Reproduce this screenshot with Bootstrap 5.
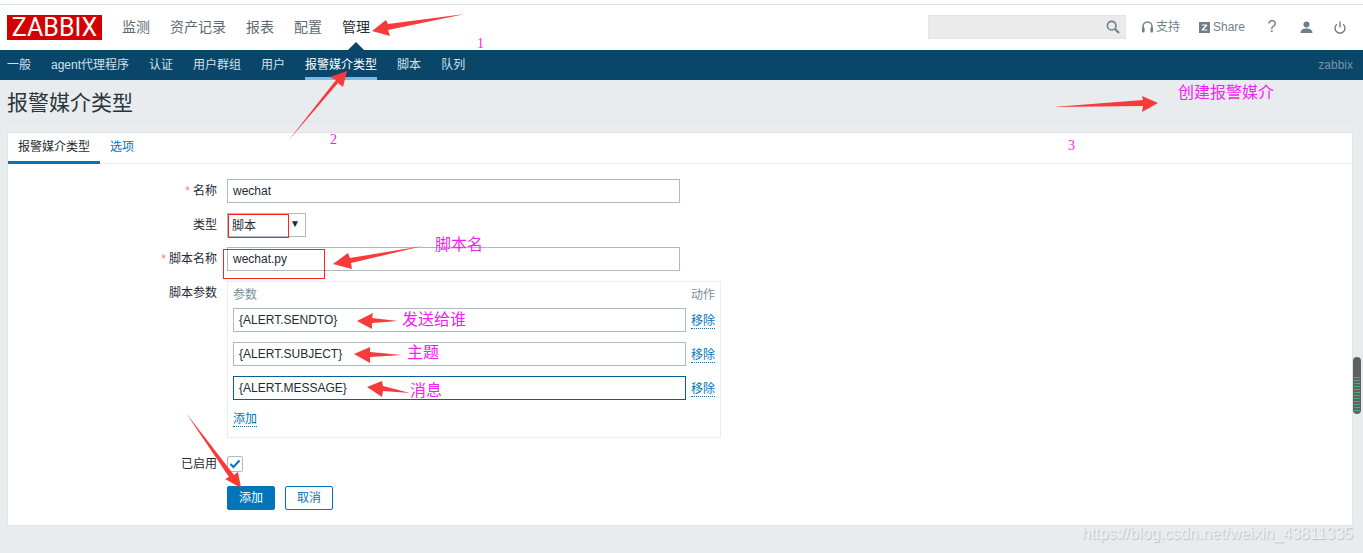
<!DOCTYPE html>
<html lang="zh">
<head>
<meta charset="utf-8">
<title>报警媒介类型</title>
<link href="https://cdn.jsdelivr.net/npm/bootstrap@5.3.0/dist/css/bootstrap.min.css" rel="stylesheet">
<style>
html,body{height:553px;overflow:hidden}
body{background:#e9ecef;font-family:"Liberation Sans","Noto Sans CJK SC",sans-serif;font-size:12px;color:#1f2c33;position:relative;line-height:14px}
a{text-decoration:none}
.top-edge{height:5px;background:#fff;border-bottom:1px solid #dfe4e7}
.zbx-head{height:45px;background:#fff;padding:10px 17px 0 7px}
.zbx-logo{width:95px;height:25px;background:#d40000;color:#fff;font-family:Roboto,"Liberation Sans",sans-serif;font-weight:400;font-size:25px;line-height:25px;text-align:center;margin-right:20px}
.main-links{gap:20px;font-size:14px;line-height:25px}
.main-links a{color:#5c6b73;position:relative;display:block}
.main-links a.on{color:#1f2c33}
.main-links a.on::after{content:"";position:absolute;left:6px;top:27px;border:8px solid transparent;border-top:0;border-bottom-color:#0a466a}
.zbx-search{width:198px;height:24px;background:#ebebeb;border:1px solid #e5e5e5;padding-right:5px}
.tool-links{color:#6f7f88;line-height:24px}
.tool-item{display:flex;align-items:center;gap:3px;color:#6f7f88}
.sub-bar{height:30px;background:#0a466a;padding:0 10px 0 7px}
.sub-links{gap:20px}
.sub-links a{color:#cfe2ee;display:block;height:30px;line-height:30px}
.sub-links a.on{color:#fff;border-bottom:3px solid #7ab9e8}
.sub-user{color:#7a94a5;line-height:30px}
.page-wrap{padding:0 10px 0 7px}
.page-head{height:42px;border-bottom:1px solid #dfe4e7;font-size:21px;line-height:46px;font-weight:400;margin:0;color:#2b363c}
.zbx-panel{margin-top:10px;height:394px;background:#fff;border:1px solid #dfe4e7;border-radius:0}
.tab-row{height:31px;border-bottom:1px solid #ebeef0;padding-left:0}
.tab-row a{display:block;height:31px;padding:0 10px;line-height:29px;color:#0275b8}
.tab-row a.on{color:#1f2c33;border-bottom:3px solid #0275b8}
.form-area{padding-top:15px}
.f-row{display:flex;margin-bottom:10px}
.f-label{width:219px;text-align:right;padding-right:10px;line-height:24px;flex:none;color:#1f2c33}
.req{color:#e08a7d;margin-right:3px}
.f-input{display:block;height:24px;width:453px;border:1px solid #acbbc2;padding:0 5px;line-height:22px;background:#fff;color:#1f2c33}
.f-select{width:79px;height:24px;border:1px solid #acbbc2;padding:0 4px;line-height:24px;justify-content:space-between}
.caret{font-size:10px;color:#1f2c33;line-height:20px;padding-right:1px}
.param-box{width:494px;height:157px;border:1px solid #ebeef0;padding:5px}
.param-head{color:#768d99;height:21px;line-height:17px}
.param-line{display:flex;justify-content:space-between;margin-bottom:10px}
.param-line .f-input{width:453px}
.param-line .f-input.hot{border-color:#0a5f96}
.dash-link{color:#0275b8;border-bottom:1px dotted #0275b8;height:15px;line-height:14px;align-self:flex-start;margin-top:6px;display:inline-block}
.add-line{margin-top:2px}
.check-box{width:16px;height:16px;border:1px solid #acbbc2;border-radius:2px;margin-top:1px}
.btn-zadd,.btn-zcancel{width:48px;height:24px;padding:0;font-size:12px;line-height:22px;border-radius:2px;border:1px solid #0275b8;--bs-btn-padding-y:0}
.btn-zadd{background:#0275b8;color:#fff}
.btn-zcancel{background:#fff;color:#0275b8;margin-left:10px}
.mark-layer{position:absolute;left:0;top:0;pointer-events:none}
.pink{position:absolute;color:#f21ff2;font-size:16px;line-height:20px;white-space:nowrap}
.pink.num{font-size:14px;font-family:"Liberation Serif",serif}
.red-box{position:absolute;border:1px solid #f22;pointer-events:none}
.scroll-thumb{position:absolute;left:1353px;top:357px;width:8px;height:57px;border-radius:4px;background:#5f6062}
.scroll-thumb::after{content:"";position:absolute;left:1px;right:1px;top:20px;bottom:1px;background:repeating-linear-gradient(#41b56a 0 1px,#5f6062 1px 3px)}
.stamp{position:absolute;right:10px;top:524px;font-size:16px;line-height:20px;color:#eef1f3;text-shadow:1px 1px 1px #b9bec2;white-space:nowrap}
</style>
</head>
<body>
<div class="top-edge"></div>
<header class="zbx-head d-flex align-items-start">
  <div class="zbx-logo">ZABBIX</div>
  <nav class="main-links d-flex">
    <a href="#">监测</a><a href="#">资产记录</a><a href="#">报表</a><a href="#">配置</a><a href="#" class="on">管理</a>
  </nav>
  <div class="ms-auto d-flex tool-links">
    <div class="zbx-search d-flex align-items-center justify-content-end">
      <svg width="14" height="14" viewBox="0 0 14 14"><circle cx="5.7" cy="5.7" r="4.3" fill="none" stroke="#6f7f88" stroke-width="1.6"/><path d="M9 9l4 4" stroke="#6f7f88" stroke-width="2.2"/></svg>
    </div>
    <a href="#" class="tool-item" style="margin-left:16px;width:38px">
      <svg width="11" height="13" viewBox="0 0 11 13" class="flex-none"><path d="M1 8V5.5a4.5 4.5 0 0 1 9 0V8" fill="none" stroke="#6f7f88" stroke-width="1.5"/><rect x="0" y="6.5" width="2.6" height="5" rx="1" fill="#6f7f88"/><rect x="8.4" y="6.5" width="2.6" height="5" rx="1" fill="#6f7f88"/></svg>
      <span>支持</span>
    </a>
    <a href="#" class="tool-item" style="margin-left:19px;width:46px">
      <svg width="11" height="11" viewBox="0 0 11 11"><rect width="11" height="11" fill="#6f7f88"/><path d="M2.8 2.6h5.4v1.1L4.5 7.5h3.8v1H2.6v-1l3.8-3.9H2.8z" fill="#fff"/></svg>
      <span>Share</span>
    </a>
    <a href="#" class="tool-item justify-content-center" style="margin-left:21px;width:12px;font-size:16px">?</a>
    <a href="#" class="tool-item" style="margin-left:22px;width:13px">
      <svg width="13" height="13" viewBox="0 0 13 13"><circle cx="6.5" cy="3.4" r="3" fill="#6f7f88"/><path d="M0.5 12c0-3 2.6-4.4 6-4.4s6 1.4 6 4.4z" fill="#6f7f88"/></svg>
    </a>
    <a href="#" class="tool-item" style="margin-left:21px;width:12px">
      <svg width="12" height="13" viewBox="0 0 12 13"><path d="M3 3.2a5 5 0 1 0 6 0" fill="none" stroke="#6f7f88" stroke-width="1.4"/><path d="M6 0.5v6" stroke="#6f7f88" stroke-width="1.4"/></svg>
    </a>
  </div>
</header>
<nav class="sub-bar d-flex justify-content-between">
  <div class="sub-links d-flex">
    <a href="#">一般</a><a href="#">agent代理程序</a><a href="#">认证</a><a href="#">用户群组</a><a href="#">用户</a><a href="#" class="on">报警媒介类型</a><a href="#">脚本</a><a href="#">队列</a>
  </div>
  <div class="sub-user">zabbix</div>
</nav>
<main class="page-wrap">
  <h1 class="page-head">报警媒介类型</h1>
  <section class="zbx-panel">
    <div class="tab-row d-flex">
      <a href="#" class="on">报警媒介类型</a><a href="#">选项</a>
    </div>
    <form class="form-area">
      <div class="f-row"><div class="f-label"><span class="req">*</span>名称</div><div class="f-input">wechat</div></div>
      <div class="f-row"><div class="f-label">类型</div><div class="f-select d-flex"><span>脚本</span><span class="caret">▼</span></div></div>
      <div class="f-row"><div class="f-label"><span class="req">*</span>脚本名称</div><div class="f-input">wechat.py</div></div>
      <div class="f-row" style="margin-bottom:17px"><div class="f-label">脚本参数</div>
        <div class="param-box">
          <div class="param-head d-flex justify-content-between"><span>参数</span><span style="width:24px">动作</span></div>
          <div class="param-line"><div class="f-input">{ALERT.SENDTO}</div><a href="#" class="dash-link">移除</a></div>
          <div class="param-line"><div class="f-input">{ALERT.SUBJECT}</div><a href="#" class="dash-link">移除</a></div>
          <div class="param-line"><div class="f-input hot">{ALERT.MESSAGE}</div><a href="#" class="dash-link">移除</a></div>
          <a href="#" class="dash-link add-line">添加</a>
        </div>
      </div>
      <div class="f-row" style="margin-bottom:13px"><div class="f-label" style="line-height:18px">已启用</div>
        <div class="check-box d-flex align-items-center justify-content-center">
          <svg width="12" height="10" viewBox="0 0 12 10"><path d="M1.5 5l3 3 6-6.5" fill="none" stroke="#0275b8" stroke-width="2"/></svg>
        </div>
      </div>
      <div class="d-flex" style="padding-left:219px">
        <button type="button" class="btn btn-zadd">添加</button>
        <button type="button" class="btn btn-zcancel">取消</button>
      </div>
    </form>
  </section>
</main>

<svg class="mark-layer" width="1363" height="553" viewBox="0 0 1363 553" fill="#f93a3a">
  <polygon points="465,14 388,24 386,20 372,31 390,36 388,30"/>
  <polygon points="288,141 336,80 330,77 347,71 343,87 338,83"/>
  <polygon points="1053,107 1143,100 1142,96 1158,103 1142,112 1143,106"/>
  <polygon points="423,246 350,258 348,253 333,264 352,269 351,263"/>
  <polygon points="398,321 372,318 373,313 357,321 372,329 372,323"/>
  <polygon points="402,355 370,352 370,347 354,354 370,363 370,357"/>
  <polygon points="410,393 383,386 382,381 367,387 382,397 383,391"/>
  <polygon points="186,413 234,475 238,472 241,488 225,479 229,477"/>
</svg>
<div class="red-box" style="left:228px;top:214px;width:61px;height:24px"></div>
<div class="red-box" style="left:223px;top:249px;width:102px;height:30px"></div>
<span class="pink" style="left:1178px;top:83px">创建报警媒介</span>
<span class="pink" style="left:435px;top:235px">脚本名</span>
<span class="pink" style="left:402px;top:310px">发送给谁</span>
<span class="pink" style="left:407px;top:343px">主题</span>
<span class="pink" style="left:410px;top:381px">消息</span>
<span class="pink num" style="left:477px;top:34px">1</span>
<span class="pink num" style="left:330px;top:130px">2</span>
<span class="pink num" style="left:1068px;top:136px">3</span>
<div class="scroll-thumb"></div>
<div class="stamp">https://blog.csdn.net/weixin_43811335</div>
<script src="https://cdn.jsdelivr.net/npm/bootstrap@5.3.0/dist/js/bootstrap.bundle.min.js"></script>
</body>
</html>
